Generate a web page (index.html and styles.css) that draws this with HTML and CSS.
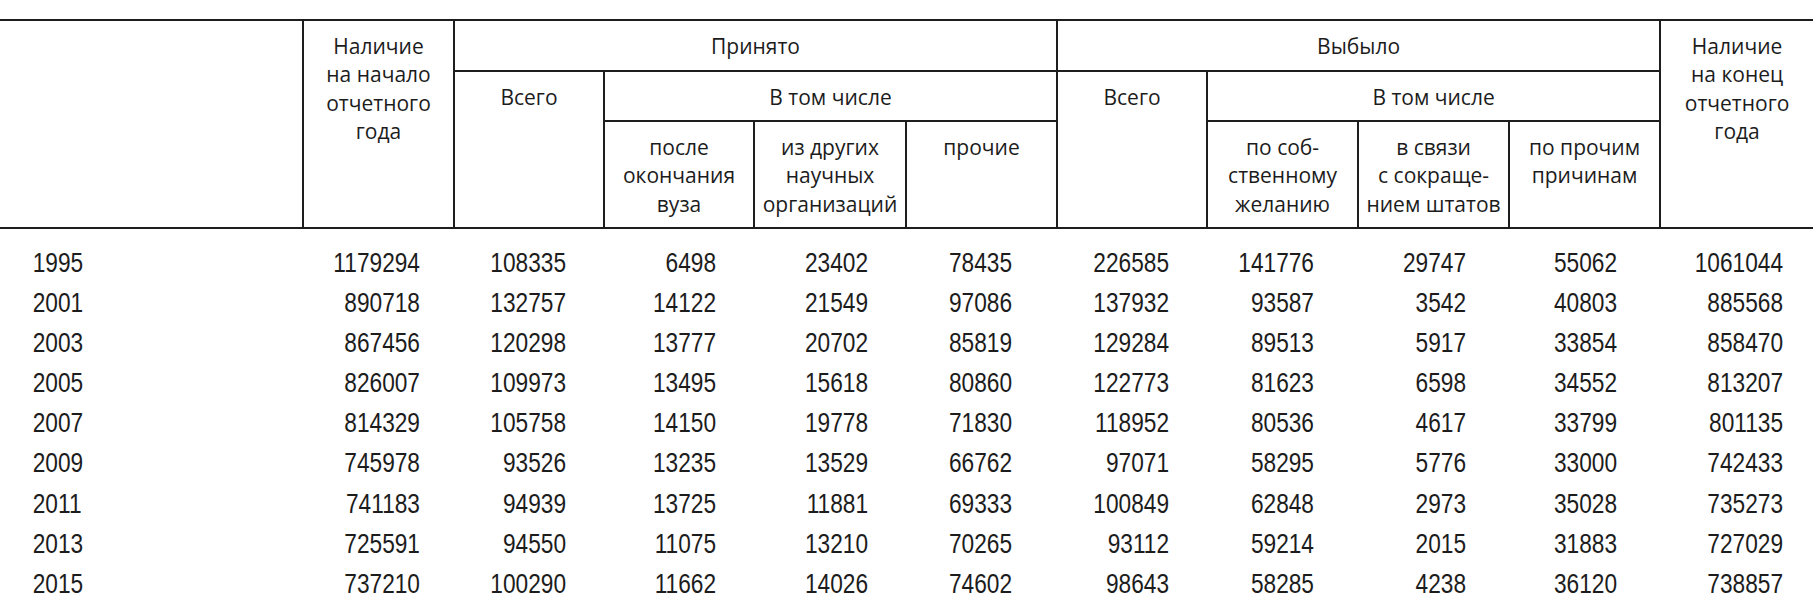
FILE: index.html
```html
<!DOCTYPE html>
<html lang="ru">
<head>
<meta charset="utf-8">
<title>Движение персонала</title>
<link rel="stylesheet" href="styles.css">
</head>
<body>
<table class="stats">
  <colgroup>
    <col class="c-year">
    <col class="c151">
    <col class="c150">
    <col class="c150">
    <col class="c152">
    <col class="c151">
    <col class="c150">
    <col class="c151">
    <col class="c151">
    <col class="c151">
    <col class="c153">
  </colgroup>
  <thead>
    <tr class="h1">
      <th rowspan="3" class="blank"></th>
      <th rowspan="3">Наличие<br>на начало<br>отчетного<br>года</th>
      <th colspan="4">Принято</th>
      <th colspan="4">Выбыло</th>
      <th rowspan="3" class="last">Наличие<br>на конец<br>отчетного<br>года</th>
    </tr>
    <tr class="h2">
      <th rowspan="2">Всего</th>
      <th colspan="3">В том числе</th>
      <th rowspan="2">Всего</th>
      <th colspan="3">В том числе</th>
    </tr>
    <tr class="h3">
      <th>после<br>окончания<br>вуза</th>
      <th>из других<br>научных<br>организаций</th>
      <th>прочие</th>
      <th>по соб-<br>ственному<br>желанию</th>
      <th>в связи<br>с сокраще-<br>нием штатов</th>
      <th>по прочим<br>причинам</th>
    </tr>
  </thead>
  <tbody>
    <tr><td>1995</td><td>1179294</td><td>108335</td><td>6498</td><td>23402</td><td>78435</td><td>226585</td><td>141776</td><td>29747</td><td>55062</td><td>1061044</td></tr>
    <tr><td>2001</td><td>890718</td><td>132757</td><td>14122</td><td>21549</td><td>97086</td><td>137932</td><td>93587</td><td>3542</td><td>40803</td><td>885568</td></tr>
    <tr><td>2003</td><td>867456</td><td>120298</td><td>13777</td><td>20702</td><td>85819</td><td>129284</td><td>89513</td><td>5917</td><td>33854</td><td>858470</td></tr>
    <tr><td>2005</td><td>826007</td><td>109973</td><td>13495</td><td>15618</td><td>80860</td><td>122773</td><td>81623</td><td>6598</td><td>34552</td><td>813207</td></tr>
    <tr><td>2007</td><td>814329</td><td>105758</td><td>14150</td><td>19778</td><td>71830</td><td>118952</td><td>80536</td><td>4617</td><td>33799</td><td>801135</td></tr>
    <tr><td>2009</td><td>745978</td><td>93526</td><td>13235</td><td>13529</td><td>66762</td><td>97071</td><td>58295</td><td>5776</td><td>33000</td><td>742433</td></tr>
    <tr><td>2011</td><td>741183</td><td>94939</td><td>13725</td><td>11881</td><td>69333</td><td>100849</td><td>62848</td><td>2973</td><td>35028</td><td>735273</td></tr>
    <tr><td>2013</td><td>725591</td><td>94550</td><td>11075</td><td>13210</td><td>70265</td><td>93112</td><td>59214</td><td>2015</td><td>31883</td><td>727029</td></tr>
    <tr><td>2015</td><td>737210</td><td>100290</td><td>11662</td><td>14026</td><td>74602</td><td>98643</td><td>58285</td><td>4238</td><td>36120</td><td>738857</td></tr>
  </tbody>
</table>
</body>
</html>
```

FILE: styles.css
```css
html, body {
  margin: 0;
  padding: 0;
  background: #ffffff;
}

body {
  padding-top: 19px;
  color: #1c1c1c;
}

.stats {
  width: 1813px;
  table-layout: fixed;
  border-collapse: collapse;
  border-spacing: 0;
}

.c-year { width: 303px; }
.c150 { width: 150px; }
.c151 { width: 151px; }
.c152 { width: 152px; }
.c153 { width: 153px; }

.stats thead th {
  font-family: "Open Sans", "Noto Sans", sans-serif;
  font-weight: 400;
  font-size: 21px;
  line-height: 28.3px;
  text-align: center;
  vertical-align: top;
  padding: 11px 0 0 0;
  border: 2px solid #1e1e1e;
  color: #1c1c1c;
  white-space: nowrap;
}

.stats thead th.blank {
  border-left: none;
}

.stats thead th.last {
  border-right: none;
}

.stats .h1 { height: 50.5px; }
.stats .h2 { height: 50.5px; }
.stats .h3 { height: 106.5px; }

/* Narrow grotesque figures (Arial Narrow proportions) from Liberation Sans */
.stats tbody td {
  font-family: "Liberation Sans Narrow", "Arial Narrow", "Liberation Sans", Arial, sans-serif;
  font-size: 27px;
  line-height: 40.1px;
  padding: 0;
  text-align: right;
  vertical-align: top;
  color: #1c1c1c;
  white-space: nowrap;
  transform: scaleX(0.84);
  transform-origin: 100% 50%;
}

.stats tbody tr:first-child td {
  padding-top: 14.5px;
}

.stats tbody td:nth-child(1) {
  text-align: left;
  padding-left: 39px;
  transform-origin: 0 50%;
}
.stats tbody td:nth-child(2) { padding-right: 40.5px; }
.stats tbody td:nth-child(3) { padding-right: 45.2px; }
.stats tbody td:nth-child(4) { padding-right: 45.2px; }
.stats tbody td:nth-child(5) { padding-right: 45.2px; }
.stats tbody td:nth-child(6) { padding-right: 53.6px; }
.stats tbody td:nth-child(7) { padding-right: 45.2px; }
.stats tbody td:nth-child(8) { padding-right: 52.4px; }
.stats tbody td:nth-child(9) { padding-right: 51.2px; }
.stats tbody td:nth-child(10) { padding-right: 51.2px; }
.stats tbody td:nth-child(11) { padding-right: 35.7px; }
```
